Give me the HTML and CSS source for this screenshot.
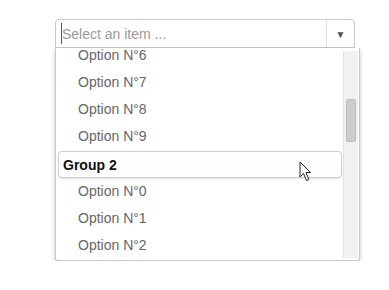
FILE: index.html
```html
<!DOCTYPE html>
<html lang="en">
<head>
  <meta charset="UTF-8">
  <title>Select</title>
  <link rel="stylesheet" href="styles.css">
</head>
<body>
  <div class="page">
    <div class="combo">
      <div class="field">
        <div class="field-input">
          <span class="caret"></span>
          <span class="placeholder">Select an item ...</span>
        </div>
        <div class="field-arrow">&#9660;</div>
      </div>

      <div class="dropdown">
        <ul class="list">
          <li class="option">Option N°6</li>
          <li class="option">Option N°7</li>
          <li class="option">Option N°8</li>
          <li class="option">Option N°9</li>
          <li class="group">Group 2</li>
          <li class="option">Option N°0</li>
          <li class="option">Option N°1</li>
          <li class="option">Option N°2</li>
        </ul>
        <div class="scrollbar">
          <div class="thumb"></div>
        </div>
      </div>

      <svg class="pointer" width="14" height="21" viewBox="0 0 14 21">
        <path d="M1 1 L1 16 L4.5 12.5 L7.5 19.5 L9.8 18.5 L7 11.5 L11.5 11.5 Z" fill="#fff" stroke="#222" stroke-width="1" stroke-linejoin="round"/>
      </svg>
    </div>
  </div>
</body>
</html>
```

FILE: styles.css
```css
:root {
  --border-color: #c9c9c9;
  --text-color: #666666;
  --placeholder: #9a9a9a;
}

body {
  margin: 0;
  background-color: #ffffff;
  font-family: 'Liberation Sans', Arial, sans-serif;
  font-size: 14px;
}

.page {
  padding: 19px 0 0 55px;
}

.combo {
  position: relative;
  width: 305px;
}

.field {
  display: flex;
  width: 300px;
  height: 29px;
  box-sizing: border-box;
  border: 1px solid var(--border-color);
  border-radius: 4px 4px 0 0;
  background-color: #ffffff;
}

.field-input {
  flex: 1;
  display: flex;
  align-items: center;
  padding-left: 5px;
}

.caret {
  width: 1px;
  height: 21px;
  background-color: #555555;
}

.placeholder {
  color: var(--placeholder);
}

.field-arrow {
  width: 27px;
  border-left: 1px solid #dcdcdc;
  display: flex;
  align-items: center;
  justify-content: center;
  color: #555555;
  font-size: 10px;
  padding-top: 1px;
}

.dropdown {
  display: flex;
  height: 213px;
  box-sizing: border-box;
  border: 1px solid var(--border-color);
  border-top: none;
  border-radius: 0 0 3px 3px;
  background-color: #ffffff;
  box-shadow: 0 2px 4px rgba(0, 0, 0, 0.22);
  overflow: hidden;
}

.list {
  flex: 1;
  list-style-type: none;
  margin: -7px 0 0 0;
  padding: 0;
}

.option {
  height: 27px;
  line-height: 28px;
  padding-left: 22px;
  color: var(--text-color);
}

.group {
  height: 27px;
  line-height: 26px;
  box-sizing: border-box;
  margin: 2px 1px 0 2px;
  padding-left: 4px;
  border: 1px solid #cfcfcf;
  border-radius: 4px;
  background-color: #fdfdfd;
  box-shadow: 0 1px 2px rgba(0, 0, 0, 0.12);
  color: #111111;
  font-weight: 700;
}

.group + .option {
  margin-top: -1px;
}

.scrollbar {
  width: 15px;
  margin: 3px 1px 2px 0;
  box-sizing: border-box;
  border-left: 1px solid #e2e2e2;
  background-color: #f1f1f1;
  padding-top: 48px;
}

.thumb {
  width: 10px;
  height: 43px;
  margin-left: 2px;
  box-sizing: border-box;
  border: 1px solid #bdbdbd;
  border-radius: 2px;
  background-color: #cdcdcd;
}

.pointer {
  position: absolute;
  left: 244px;
  top: 142px;
}
```
